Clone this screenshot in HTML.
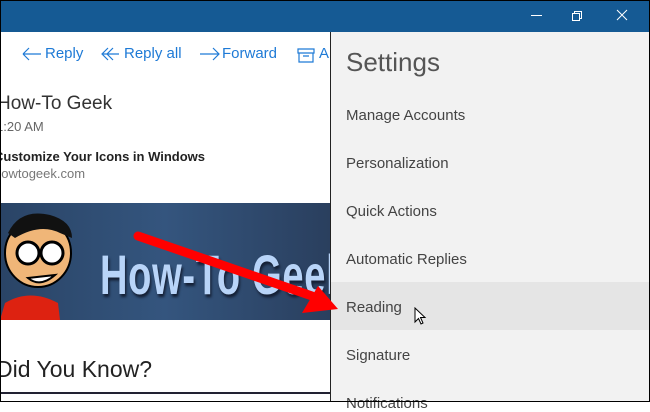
<!DOCTYPE html>
<html><head><style>
*{margin:0;padding:0;box-sizing:border-box}
body{width:650px;height:402px;overflow:hidden;background:#fff;font-family:"Segoe UI","Liberation Sans",sans-serif;position:relative}
.abs{position:absolute;white-space:nowrap}
</style></head><body>
<div class="abs" style="left:0;top:0;width:650px;height:402px;border:1px solid #000;z-index:10"></div>
<div class="abs" style="left:0;top:0;width:650px;height:32px;background:#155a94"></div>
<svg class="abs" style="left:520px;top:6px" width="125" height="20" fill="none" stroke="#fff">
<line x1="11" y1="9.5" x2="22" y2="9.5"/>
<rect x="52.5" y="7.5" width="7" height="7"/><path d="M54.5 7.5V5.5H61.5V12.5H59.5"/>
<path d="M97 4L107 14M107 4L97 14"/></svg>
<div class="abs" style="left:0;top:32px;width:330px;height:370px;background:#fff"></div>
<svg class="abs" style="left:20px;top:45px" width="320" height="20" fill="none" stroke="#1e7ad6" stroke-width="1.2">
<path d="M3 9H21M3 9L9 3M3 9L9 15"/>
<path d="M83 9H99M88 3L82 9L88 15M93 3L87 9L93 15"/>
<path d="M180 9H199M193 3L199 9L193 15"/>
<path d="M278 4H294V8H278ZM279 8V17H293V8M283 11H289"/>
</svg>
<div class="abs" style="left:45px;top:45px;font-size:15px;color:#1e7ad6">Reply</div>
<div class="abs" style="left:124px;top:45px;font-size:15px;color:#1e7ad6">Reply all</div>
<div class="abs" style="left:222px;top:45px;font-size:15px;color:#1e7ad6">Forward</div>
<div class="abs" style="left:319px;top:45px;font-size:15px;color:#1e7ad6">A</div>
<div class="abs" style="left:-3px;top:93px;font-size:19px;color:#333">How-To Geek</div>
<div class="abs" style="left:-4px;top:119px;font-size:13px;color:#666">1:20 AM</div>
<div class="abs" style="left:-6px;top:149px;font-size:13px;color:#222;font-weight:bold">Customize Your Icons in Windows</div>
<div class="abs" style="left:-6px;top:166px;font-size:13px;color:#777">howtogeek.com</div>
<div class="abs" style="left:0;top:203px;width:330px;height:117px;background:linear-gradient(90deg,#2a4466,#34557e 50%,#2a3f5e);overflow:hidden">
<div class="abs" style="left:100px;top:44px;font-size:56px;line-height:56px;font-weight:bold;color:#b8d4f8;letter-spacing:1px;transform:scaleX(.68);transform-origin:left;text-shadow:2px 3px 3px #152035">How-To Geek N</div>
</div>
<svg class="abs" style="left:0;top:203px" width="80" height="117">
<ellipse cx="38" cy="50" rx="33" ry="34" fill="#f0b678" stroke="#000" stroke-width="2"/>
<path d="M8 30Q20 5 50 12Q72 18 72 35L60 30Q40 20 15 35Z" fill="#111"/>
<circle cx="28" cy="50" r="11" fill="#fff" stroke="#000" stroke-width="3"/><circle cx="52" cy="50" r="11" fill="#fff" stroke="#000" stroke-width="3"/>
<path d="M28 75Q40 85 55 72Z" fill="#fff" stroke="#000" stroke-width="2"/>
<path d="M0 117L5 100Q30 85 58 100L60 117Z" fill="#d21"/>
</svg>
<div class="abs" style="left:-4px;top:356px;font-size:23px;color:#222;font-family:'Liberation Sans',sans-serif">Did You Know?</div>
<div class="abs" style="left:0;top:392px;width:330px;height:2px;background:#223"></div>
<div class="abs" style="left:330px;top:32px;width:320px;height:370px;background:#f2f2f2;border-left:1px solid #222"></div>
<div class="abs" style="left:331px;top:282px;width:319px;height:48px;background:#e5e5e5"></div>
<div class="abs" style="left:346px;top:47px;font-size:26px;color:#555;font-weight:300">Settings</div>
<div class="abs" style="left:346px;top:107px;font-size:15px;color:#444">Manage Accounts</div>
<div class="abs" style="left:346px;top:155px;font-size:15px;color:#444">Personalization</div>
<div class="abs" style="left:346px;top:203px;font-size:15px;color:#444">Quick Actions</div>
<div class="abs" style="left:346px;top:251px;font-size:15px;color:#444">Automatic Replies</div>
<div class="abs" style="left:346px;top:299px;font-size:15px;color:#444">Reading</div>
<div class="abs" style="left:346px;top:347px;font-size:15px;color:#444">Signature</div>
<div class="abs" style="left:346px;top:395px;font-size:15px;color:#444">Notifications</div>
<svg class="abs" style="left:414px;top:307px" width="14" height="20"><path d="M1 1V15L4.5 11.5L7 17L9 16L6.5 10.5H11Z" fill="#fff" stroke="#000"/></svg>
<svg class="abs" style="left:0;top:0" width="650" height="402">
<path d="M138 236L312 296" stroke="#f00" stroke-width="9" stroke-linecap="round"/>
<polygon points="318,286 338,309 302,313" fill="#f00"/>
</svg>
</body></html>
